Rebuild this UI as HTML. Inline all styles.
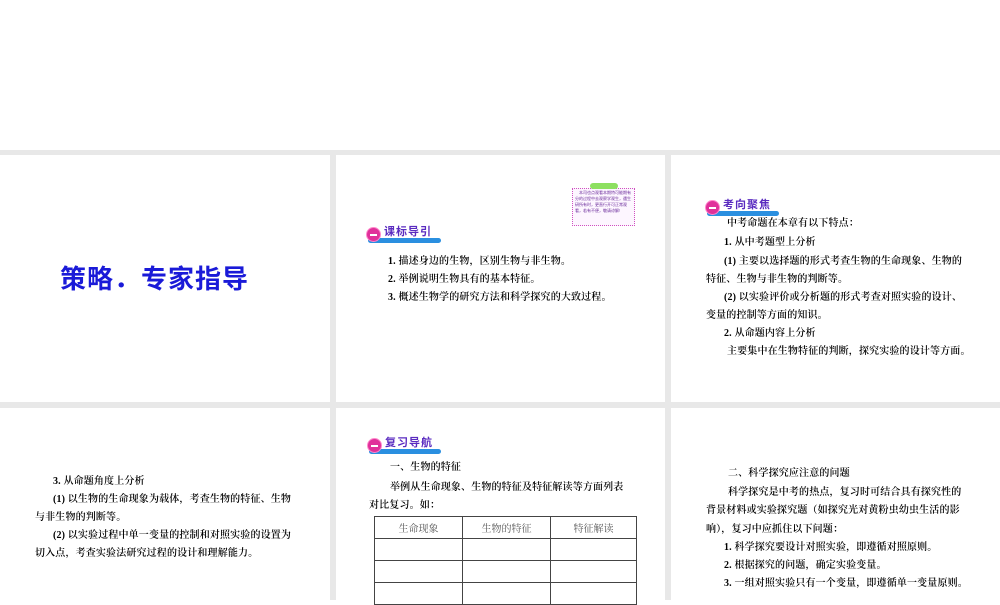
<!DOCTYPE html>
<html><head><meta charset="utf-8"><style>
body{margin:0;width:1000px;height:600px;background:#fff;position:relative;overflow:hidden;font-family:"Liberation Sans","Noto Sans CJK SC",sans-serif;}
.band{position:absolute;left:0;top:150px;width:1000px;height:450px;background:#e8e8e8;}
.s{position:absolute;background:#fff;}
.t{position:absolute;font-family:"Liberation Serif","Noto Serif CJK SC",serif;font-size:10px;color:#000;white-space:nowrap;line-height:12px;font-weight:600;letter-spacing:0.15px;}
.bn{position:absolute;height:19px;}
.bn .bar{position:absolute;left:2px;right:0;bottom:0;height:5px;background:#2a8fe0;border-radius:4px;}
.bn .c{position:absolute;left:0;top:3px;width:13px;height:13px;border-radius:50%;background:#e0309a;border:1px solid #f8c;}
.bn .c:after{content:"";position:absolute;left:3px;top:6px;width:7px;height:1.5px;background:#fff;}
.bn .x{position:absolute;left:18px;top:-1px;font-size:11px;font-weight:bold;color:#5a2bc0;letter-spacing:1px;font-family:"Liberation Sans","Noto Sans CJK SC",sans-serif;}
td{border:1px solid #444;height:21px;font-family:"Liberation Serif","Noto Serif CJK SC",serif;font-size:10px;color:#555;text-align:center;padding:0;}
</style></head><body>
<div class="band"></div>
<div class="s" style="left:0;top:155px;width:330px;height:247px"></div>
<div class="s" style="left:336px;top:155px;width:329px;height:247px"></div>
<div class="s" style="left:671px;top:155px;width:329px;height:247px"></div>
<div class="s" style="left:0;top:408px;width:330px;height:192px"></div>
<div class="s" style="left:336px;top:408px;width:329px;height:192px"></div>
<div class="s" style="left:671px;top:408px;width:329px;height:192px"></div>

<div style="position:absolute;left:60px;top:259px;font-size:26px;font-weight:bold;color:#1a1ad8;font-family:'Liberation Sans','Noto Sans CJK SC',sans-serif;white-space:nowrap;letter-spacing:1px">策略．专家指导</div>

<!-- slide 2 -->
<div style="position:absolute;left:572px;top:188px;width:61px;height:36px;border:1px dotted #d050c0;background:#fdf6ff"></div>
<div style="position:absolute;left:590px;top:183px;width:28px;height:6px;background:#8de060;border-radius:3px"></div>
<div style="position:absolute;left:575px;top:190px;width:56px;font-size:4px;line-height:6px;color:#6a2a9a;font-family:'Noto Sans CJK SC',sans-serif;">　本司也点观看本期特可能期有分的过程中去观察学观生，遇生研所有时，更直行开可正常观看，若有不便，敬请谅解!</div>
<div class="bn" style="left:366px;top:224px;width:75px"><div class="bar"></div><div class="c"></div><div class="x">课标导引</div></div>
<div class="t" style="left:388px;top:256px">1. 描述身边的生物，区别生物与非生物。</div>
<div class="t" style="left:388px;top:274px">2. 举例说明生物具有的基本特征。</div>
<div class="t" style="left:388px;top:292px">3. 概述生物学的研究方法和科学探究的大致过程。</div>

<!-- slide 3 -->
<div class="bn" style="left:705px;top:197px;width:74px"><div class="bar"></div><div class="c"></div><div class="x">考向聚焦</div></div>
<div class="t" style="left:727px;top:218px">中考命题在本章有以下特点：</div>
<div class="t" style="left:724px;top:237px">1. 从中考题型上分析</div>
<div class="t" style="left:724px;top:256px">(1) 主要以选择题的形式考查生物的生命现象、生物的</div>
<div class="t" style="left:706px;top:274px">特征、生物与非生物的判断等。</div>
<div class="t" style="left:724px;top:292px">(2) 以实验评价或分析题的形式考查对照实验的设计、</div>
<div class="t" style="left:706px;top:310px">变量的控制等方面的知识。</div>
<div class="t" style="left:724px;top:328px">2. 从命题内容上分析</div>
<div class="t" style="left:727px;top:346px">主要集中在生物特征的判断，探究实验的设计等方面。</div>

<!-- slide 4 -->
<div class="t" style="left:53px;top:476px">3. 从命题角度上分析</div>
<div class="t" style="left:53px;top:494px">(1) 以生物的生命现象为载体，考查生物的特征、生物</div>
<div class="t" style="left:35px;top:512px">与非生物的判断等。</div>
<div class="t" style="left:53px;top:530px">(2) 以实验过程中单一变量的控制和对照实验的设置为</div>
<div class="t" style="left:35px;top:548px">切入点，考查实验法研究过程的设计和理解能力。</div>

<!-- slide 5 -->
<div class="bn" style="left:367px;top:435px;width:74px"><div class="bar"></div><div class="c"></div><div class="x">复习导航</div></div>
<div class="t" style="left:390px;top:462px">一、生物的特征</div>
<div class="t" style="left:390px;top:482px">举例从生命现象、生物的特征及特征解读等方面列表</div>
<div class="t" style="left:369px;top:500px">对比复习。如：</div>
<table style="position:absolute;left:374px;top:516px;width:263px;border-collapse:collapse">
<tr><td style="width:87px">生命现象</td><td style="width:87px">生物的特征</td><td>特征解读</td></tr>
<tr><td></td><td></td><td></td></tr><tr><td></td><td></td><td></td></tr><tr><td></td><td></td><td></td></tr></table>

<!-- slide 6 -->
<div class="t" style="left:728px;top:468px">二、科学探究应注意的问题</div>
<div class="t" style="left:728px;top:487px">科学探究是中考的热点，复习时可结合具有探究性的</div>
<div class="t" style="left:706px;top:505px">背景材料或实验探究题（如探究光对黄粉虫幼虫生活的影</div>
<div class="t" style="left:706px;top:524px">响），复习中应抓住以下问题：</div>
<div class="t" style="left:724px;top:542px">1. 科学探究要设计对照实验，即遵循对照原则。</div>
<div class="t" style="left:724px;top:560px">2. 根据探究的问题，确定实验变量。</div>
<div class="t" style="left:724px;top:578px">3. 一组对照实验只有一个变量，即遵循单一变量原则。</div>
</body></html>
